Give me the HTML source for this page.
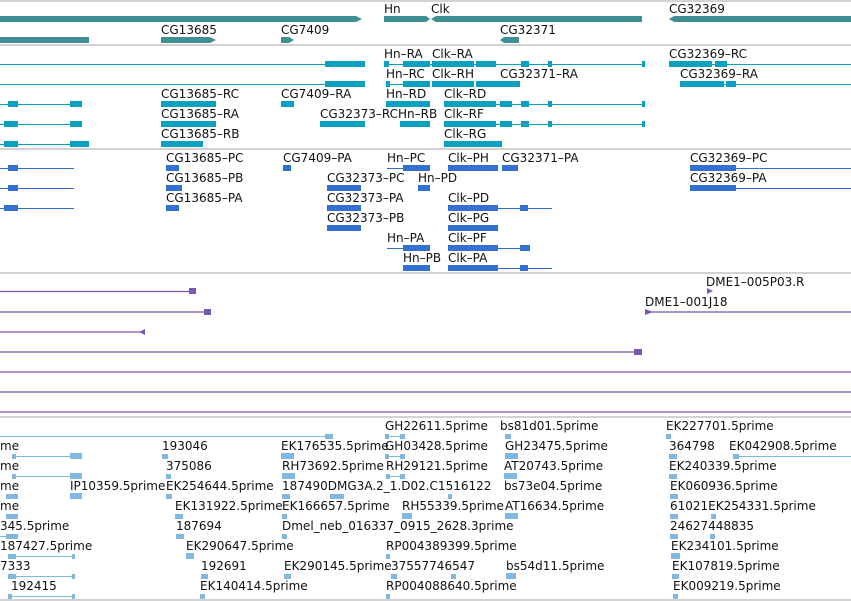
<!DOCTYPE html>
<html><head><meta charset="utf-8"><style>
html,body{margin:0;padding:0;background:#fff;width:851px;height:601px;overflow:hidden}
svg{display:block}
text{font-family:"DejaVu Sans","Liberation Sans",sans-serif;font-size:12px;fill:#111}
.g{fill:#3f8f95}.gl{stroke:#3f8f95}
.t{fill:#0aa0c0}.tl{stroke:#0aa0c0;stroke-width:1}
.p{fill:#3370d0}.pl{stroke:#3370d0;stroke-width:1}
.u{fill:#7a58b0}.ul{stroke:#7a58b0;stroke-width:1.3}
.e{fill:#80b8e0}.el{stroke:#80b8e0;stroke-width:1}
.sep{stroke:#c4c4c4;stroke-width:1.5}
</style></head><body>
<svg width="851" height="601" viewBox="0 0 851 601" xmlns="http://www.w3.org/2000/svg">
<!-- separators -->
<line class="sep" x1="0" y1="1" x2="851" y2="1"/>
<line class="sep" x1="0" y1="45" x2="851" y2="45"/>
<line class="sep" x1="0" y1="149" x2="851" y2="149"/>
<line class="sep" x1="0" y1="273" x2="851" y2="273"/>
<line class="sep" x1="0" y1="417" x2="851" y2="417"/>
<line class="sep" x1="0" y1="600" x2="851" y2="600"/>

<!-- GENE track -->
<text x="384" y="13">Hn</text><text x="431" y="13">Clk</text><text x="669" y="13">CG32369</text>
<polygon class="g" points="0,16 356,16 362,19 356,22 0,22"/>
<polygon class="g" points="384,16 426,16 430,19 426,22 384,22"/>
<polygon class="g" points="431,19 436,16 642,16 642,22 436,22"/>
<polygon class="g" points="669,19 674,16 851,16 851,22 674,22"/>
<text x="161" y="34">CG13685</text><text x="281" y="34">CG7409</text><text x="500" y="34">CG32371</text>
<rect class="g" x="0" y="37" width="89" height="6"/>
<polygon class="g" points="161,37 210,37 216,40 210,43 161,43"/>
<polygon class="g" points="281,37 289,37 294,40 289,43 281,43"/>
<polygon class="g" points="500,40 504,37 519,37 519,43 504,43"/>

<!-- TRANSCRIPT track -->
<text x="384" y="58">Hn–RA</text><text x="432" y="58">Clk–RA</text><text x="669" y="58">CG32369–RC</text>
<line class="tl" x1="0" y1="64.5" x2="326" y2="64.5"/>
<rect class="t" x="325" y="61" width="40" height="6"/>
<line class="tl" x1="384" y1="64.5" x2="644" y2="64.5"/>
<rect class="t" x="384" y="61" width="5" height="6"/><rect class="t" x="403" y="61" width="27" height="6"/>
<rect class="t" x="432" y="61" width="42" height="6"/><rect class="t" x="476" y="61" width="20" height="6"/>
<rect class="t" x="521" y="61" width="8" height="6"/><rect class="t" x="548" y="61" width="4" height="6"/><rect class="t" x="642" y="61" width="3" height="6"/>
<line class="tl" x1="669" y1="64.5" x2="851" y2="64.5"/>
<rect class="t" x="669" y="61" width="43" height="6"/><rect class="t" x="715" y="61" width="12" height="6"/>

<text x="386" y="78">Hn–RC</text><text x="432" y="78">Clk–RH</text><text x="500" y="78">CG32371–RA</text><text x="680" y="78">CG32369–RA</text>
<line class="tl" x1="0" y1="84.5" x2="326" y2="84.5"/>
<rect class="t" x="325" y="81" width="40" height="6"/>
<line class="tl" x1="386" y1="84.5" x2="430" y2="84.5"/>
<rect class="t" x="386" y="81" width="4" height="6"/><rect class="t" x="403" y="81" width="27" height="6"/>
<rect class="t" x="432" y="81" width="42" height="6"/><rect class="t" x="476" y="81" width="44" height="6"/>
<line class="tl" x1="680" y1="84.5" x2="851" y2="84.5"/>
<rect class="t" x="680" y="81" width="44" height="6"/><rect class="t" x="726" y="81" width="10" height="6"/>

<text x="161" y="98">CG13685–RC</text><text x="281" y="98">CG7409–RA</text><text x="386" y="98">Hn–RD</text><text x="444" y="98">Clk–RD</text>
<line class="tl" x1="0" y1="104.5" x2="82" y2="104.5"/>
<rect class="t" x="8" y="101" width="10" height="6"/><rect class="t" x="70" y="101" width="12" height="6"/>
<rect class="t" x="161" y="101" width="55" height="6"/><rect class="t" x="281" y="101" width="13" height="6"/>
<rect class="t" x="386" y="101" width="44" height="6"/>
<line class="tl" x1="444" y1="104.5" x2="644" y2="104.5"/>
<rect class="t" x="444" y="101" width="52" height="6"/><rect class="t" x="500" y="101" width="12" height="6"/><rect class="t" x="521" y="101" width="8" height="6"/><rect class="t" x="548" y="101" width="4" height="6"/><rect class="t" x="642" y="101" width="3" height="6"/>

<text x="161" y="118">CG13685–RA</text><text x="320" y="118">CG32373–RCHn–RB</text><text x="444" y="118">Clk–RF</text>
<line class="tl" x1="0" y1="124.5" x2="82" y2="124.5"/>
<rect class="t" x="4" y="121" width="14" height="6"/><rect class="t" x="70" y="121" width="12" height="6"/>
<rect class="t" x="161" y="121" width="55" height="6"/>
<rect class="t" x="320" y="121" width="45" height="6"/><rect class="t" x="400" y="121" width="30" height="6"/>
<line class="tl" x1="444" y1="124.5" x2="644" y2="124.5"/>
<rect class="t" x="444" y="121" width="52" height="6"/><rect class="t" x="500" y="121" width="12" height="6"/><rect class="t" x="521" y="121" width="8" height="6"/><rect class="t" x="548" y="121" width="4" height="6"/><rect class="t" x="642" y="121" width="3" height="6"/>

<text x="161" y="138">CG13685–RB</text><text x="444" y="138">Clk–RG</text>
<line class="tl" x1="0" y1="144.5" x2="89" y2="144.5"/>
<rect class="t" x="4" y="141" width="14" height="6"/><rect class="t" x="70" y="141" width="19" height="6"/>
<rect class="t" x="161" y="141" width="42" height="6"/>
<rect class="t" x="444" y="141" width="58" height="6"/>

<!-- PROTEIN track -->
<text x="166" y="162">CG13685–PC</text><text x="283" y="162">CG7409–PA</text><text x="387" y="162">Hn–PC</text><text x="448" y="162">Clk–PH</text><text x="502" y="162">CG32371–PA</text><text x="690" y="162">CG32369–PC</text>
<line class="pl" x1="0" y1="168.5" x2="74" y2="168.5"/>
<rect class="p" x="8" y="165" width="10" height="6"/>
<rect class="p" x="166" y="165" width="13" height="6"/><rect class="p" x="283" y="165" width="8" height="6"/>
<line class="pl" x1="387" y1="168.5" x2="430" y2="168.5"/><rect class="p" x="403" y="165" width="27" height="6"/>
<rect class="p" x="448" y="165" width="50" height="6"/><rect class="p" x="502" y="165" width="16" height="6"/>
<line class="pl" x1="690" y1="168.5" x2="851" y2="168.5"/><rect class="p" x="690" y="165" width="46" height="6"/>

<text x="166" y="182">CG13685–PB</text><text x="327" y="182">CG32373–PC</text><text x="418" y="182">Hn–PD</text><text x="690" y="182">CG32369–PA</text>
<line class="pl" x1="0" y1="188.5" x2="74" y2="188.5"/>
<rect class="p" x="8" y="185" width="10" height="6"/><rect class="p" x="166" y="185" width="16" height="6"/>
<rect class="p" x="327" y="185" width="34" height="6"/><rect class="p" x="418" y="185" width="12" height="6"/>
<line class="pl" x1="690" y1="188.5" x2="851" y2="188.5"/><rect class="p" x="690" y="185" width="46" height="6"/>

<text x="166" y="202">CG13685–PA</text><text x="327" y="202">CG32373–PA</text><text x="448" y="202">Clk–PD</text>
<line class="pl" x1="0" y1="208.5" x2="74" y2="208.5"/>
<rect class="p" x="4" y="205" width="14" height="6"/><rect class="p" x="166" y="205" width="13" height="6"/>
<rect class="p" x="327" y="205" width="34" height="6"/>
<line class="pl" x1="448" y1="208.5" x2="552" y2="208.5"/><rect class="p" x="448" y="205" width="50" height="6"/><rect class="p" x="520" y="205" width="8" height="6"/>

<text x="327" y="222">CG32373–PB</text><text x="448" y="222">Clk–PG</text>
<rect class="p" x="327" y="225" width="34" height="6"/><rect class="p" x="448" y="225" width="50" height="6"/>

<text x="387" y="242">Hn–PA</text><text x="448" y="242">Clk–PF</text>
<line class="pl" x1="387" y1="248.5" x2="430" y2="248.5"/><rect class="p" x="403" y="245" width="27" height="6"/>
<line class="pl" x1="448" y1="248.5" x2="530" y2="248.5"/><rect class="p" x="448" y="245" width="50" height="6"/><rect class="p" x="520" y="245" width="10" height="6"/>

<text x="403" y="262">Hn–PB</text><text x="448" y="262">Clk–PA</text>
<rect class="p" x="403" y="265" width="27" height="6"/>
<line class="pl" x1="448" y1="268.5" x2="552" y2="268.5"/><rect class="p" x="448" y="265" width="50" height="6"/><rect class="p" x="520" y="265" width="8" height="6"/>

<!-- PURPLE track -->
<text x="706" y="286">DME1–005P03.R</text>
<polygon class="u" points="707,288 713,291 707,294"/>
<line class="ul" x1="0" y1="291.5" x2="193" y2="291.5"/><rect class="u" x="189" y="288" width="7" height="6"/>
<text x="645" y="306">DME1–001J18</text>
<line class="ul" x1="0" y1="312" x2="210" y2="312"/><rect class="u" x="204" y="309" width="7" height="6"/>
<line class="ul" x1="645" y1="312" x2="851" y2="312"/><polygon class="u" points="645,309 653,312 645,315"/>
<line class="ul" x1="0" y1="332" x2="145" y2="332"/><polygon class="u" points="145,329 139,332 145,335"/>
<line class="ul" x1="0" y1="352" x2="642" y2="352"/><rect class="u" x="634" y="349" width="8" height="6"/>
<line class="ul" x1="0" y1="372" x2="851" y2="372"/>
<line class="ul" x1="0" y1="392" x2="851" y2="392"/>
<line class="ul" x1="0" y1="412" x2="851" y2="412"/>

<!-- EST track -->
<g>
<text x="385" y="430">GH22611.5prime</text><text x="500" y="430">bs81d01.5prime</text><text x="666" y="430">EK227701.5prime</text>
<line class="el" x1="0" y1="436.5" x2="333" y2="436.5"/><rect class="e" x="325" y="434" width="8" height="5"/>
<line class="el" x1="385" y1="436.5" x2="405" y2="436.5"/><rect class="e" x="385" y="434" width="4" height="5"/><rect class="e" x="400" y="434" width="5" height="5"/>
<rect class="e" x="505" y="434" width="6" height="5"/><rect class="e" x="666" y="434" width="5" height="5"/>

<text x="0" y="450">me</text><text x="162" y="450">193046</text><text x="281" y="450">EK176535.5prime</text><text x="385" y="450">GH03428.5prime</text><text x="505" y="450">GH23475.5prime</text><text x="669" y="450">364798</text><text x="729" y="450">EK042908.5prime</text>
<line class="el" x1="12" y1="456.5" x2="82" y2="456.5"/><rect class="e" x="12" y="454" width="4" height="5"/><rect class="e" x="70" y="453" width="12" height="6"/>
<rect class="e" x="162" y="454" width="6" height="5"/><rect class="e" x="281" y="453" width="13" height="6"/>
<line class="el" x1="385" y1="456.5" x2="404" y2="456.5"/><rect class="e" x="385" y="454" width="4" height="5"/><rect class="e" x="400" y="454" width="5" height="5"/>
<rect class="e" x="505" y="453" width="13" height="6"/><rect class="e" x="669" y="454" width="8" height="5"/>
<line class="el" x1="733" y1="456.5" x2="851" y2="456.5"/><rect class="e" x="733" y="454" width="6" height="5"/>

<text x="0" y="470">me</text><text x="166" y="470">375086</text><text x="282" y="470">RH73692.5prime</text><text x="386" y="470">RH29121.5prime</text><text x="504" y="470">AT20743.5prime</text><text x="669" y="470">EK240339.5prime</text>
<line class="el" x1="12" y1="476.5" x2="82" y2="476.5"/><rect class="e" x="12" y="474" width="4" height="5"/><rect class="e" x="70" y="473" width="12" height="6"/>
<rect class="e" x="166" y="474" width="5" height="5"/><rect class="e" x="282" y="473" width="13" height="6"/>
<line class="el" x1="386" y1="476.5" x2="404" y2="476.5"/><rect class="e" x="386" y="474" width="4" height="5"/><rect class="e" x="400" y="474" width="5" height="5"/>
<rect class="e" x="504" y="473" width="13" height="6"/><rect class="e" x="669" y="474" width="8" height="5"/>

<text x="0" y="490">me</text><text x="70" y="490">IP10359.5prime</text><text x="166" y="490">EK254644.5prime</text><text x="282" y="490">187490DMG3A.2_1.D02.C1516122</text><text x="504" y="490">bs73e04.5prime</text><text x="670" y="490">EK060936.5prime</text>
<rect class="e" x="6" y="494" width="12" height="5"/><rect class="e" x="70" y="493" width="12" height="6"/><rect class="e" x="166" y="494" width="6" height="5"/>
<rect class="e" x="282" y="494" width="8" height="5"/><rect class="e" x="330" y="494" width="14" height="5"/><rect class="e" x="448" y="494" width="4" height="5"/>
<rect class="e" x="670" y="494" width="8" height="5"/>

<text x="0" y="510">me</text><text x="175" y="510">EK131922.5prime</text><text x="282" y="510">EK166657.5prime</text><text x="402" y="510">RH55339.5prime</text><text x="505" y="510">AT16634.5prime</text><text x="670" y="510">61021EK254331.5prime</text>
<rect class="e" x="6" y="514" width="12" height="5"/><rect class="e" x="175" y="514" width="8" height="5"/><rect class="e" x="282" y="514" width="5" height="5"/>
<rect class="e" x="402" y="513" width="10" height="6"/><rect class="e" x="505" y="513" width="13" height="6"/><rect class="e" x="670" y="514" width="8" height="5"/><rect class="e" x="711" y="514" width="5" height="5"/>

<text x="0" y="530">345.5prime</text><text x="176" y="530">187694</text><text x="282" y="530">Dmel_neb_016337_0915_2628.3prime</text><text x="670" y="530">24627448835</text>
<line class="el" x1="0" y1="536.5" x2="18" y2="536.5"/><rect class="e" x="6" y="534" width="12" height="5"/>
<rect class="e" x="176" y="534" width="8" height="5"/><rect class="e" x="282" y="534" width="5" height="5"/><rect class="e" x="670" y="534" width="8" height="5"/><rect class="e" x="710" y="534" width="5" height="5"/>

<text x="0" y="550">187427.5prime</text><text x="186" y="550">EK290647.5prime</text><text x="386" y="550">RP004389399.5prime</text><text x="671" y="550">EK234101.5prime</text>
<line class="el" x1="8" y1="556.5" x2="74" y2="556.5"/><rect class="e" x="8" y="554" width="8" height="5"/><rect class="e" x="72" y="554" width="3" height="5"/>
<rect class="e" x="186" y="553" width="8" height="6"/><rect class="e" x="386" y="554" width="4" height="5"/><rect class="e" x="671" y="553" width="9" height="6"/>

<text x="0" y="570">7333</text><text x="201" y="570">192691</text><text x="284" y="570">EK290145.5prime</text><text x="391" y="570">37557746547</text><text x="506" y="570">bs54d11.5prime</text><text x="672" y="570">EK107819.5prime</text>
<line class="el" x1="8" y1="576.5" x2="74" y2="576.5"/><rect class="e" x="8" y="574" width="8" height="5"/><rect class="e" x="72" y="574" width="3" height="5"/>
<rect class="e" x="201" y="574" width="7" height="5"/><rect class="e" x="284" y="574" width="7" height="5"/><rect class="e" x="391" y="574" width="6" height="5"/><rect class="e" x="451" y="574" width="5" height="5"/>
<rect class="e" x="506" y="573" width="10" height="6"/><rect class="e" x="672" y="574" width="7" height="5"/>

<text x="11" y="590">192415</text><text x="200" y="590">EK140414.5prime</text><text x="386" y="590">RP004088640.5prime</text><text x="673" y="590">EK009219.5prime</text>
<line class="el" x1="8" y1="596.5" x2="74" y2="596.5"/><rect class="e" x="8" y="594" width="4" height="5"/><rect class="e" x="72" y="594" width="3" height="5"/>
<rect class="e" x="200" y="594" width="5" height="5"/><rect class="e" x="386" y="594" width="4" height="5"/><rect class="e" x="673" y="594" width="5" height="5"/>
</g>
</svg>
</body></html>
